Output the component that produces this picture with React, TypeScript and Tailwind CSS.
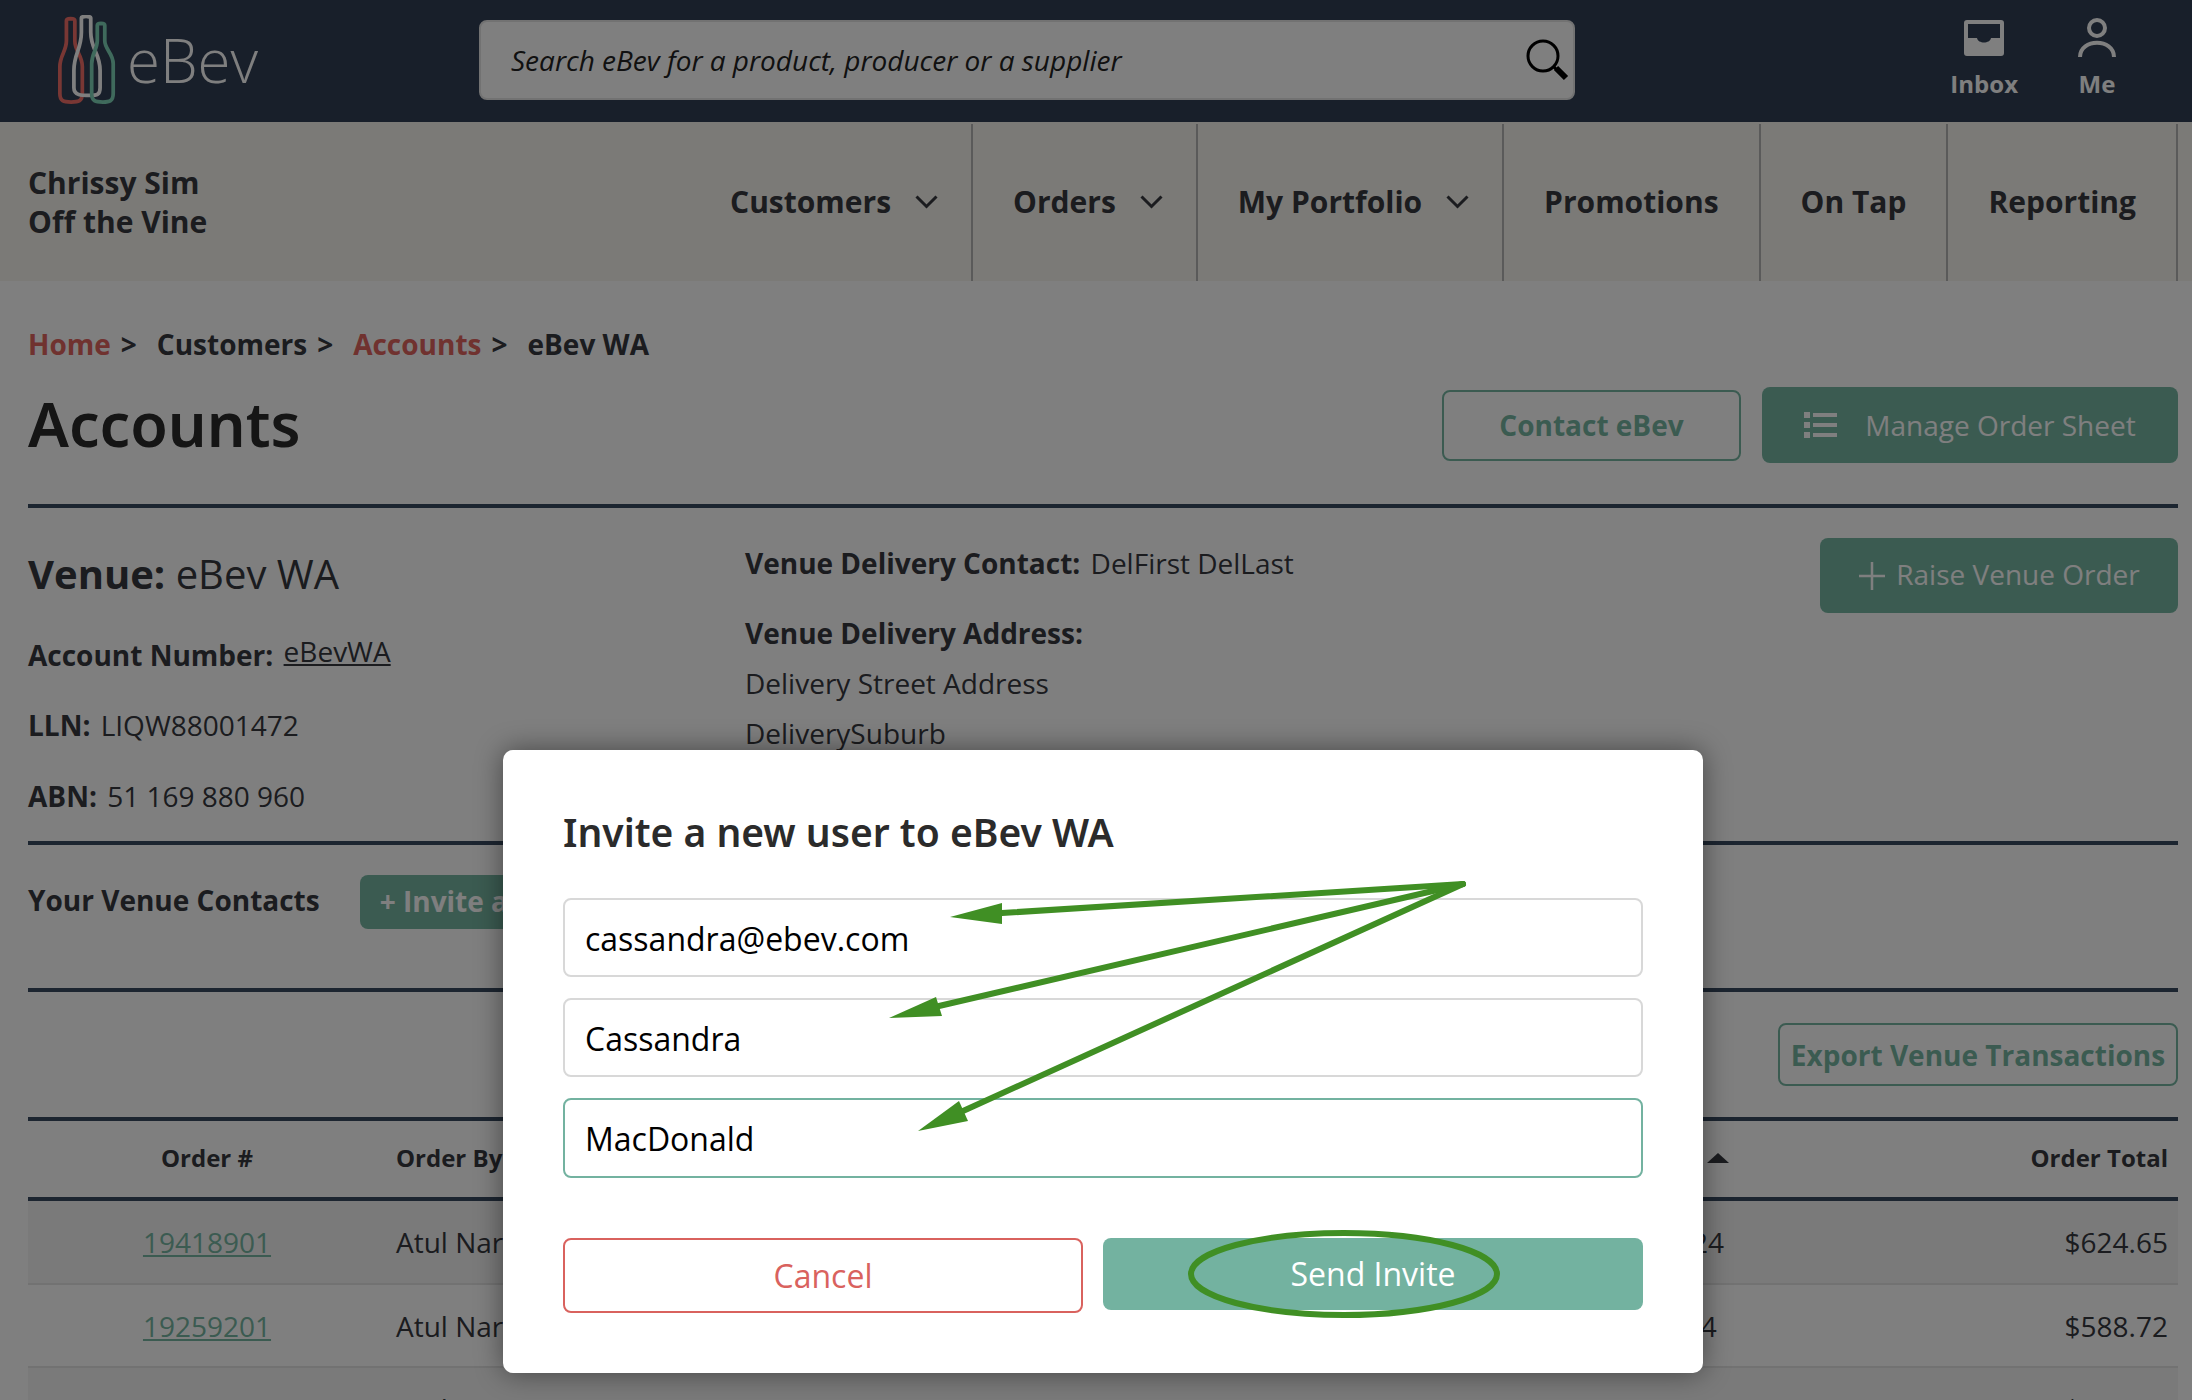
const navItems = [
  { label: "Customers", menu: true },
  { label: "Orders", menu: true },
  { label: "My Portfolio", menu: true },
  { label: "Promotions", menu: false },
  { label: "On Tap", menu: false },
  { label: "Reporting", menu: false },
];

const rows = [
  { id: "19418901", by: "Atul Narayan", date: "26 Feb 2024", total: "$624.65", shade: true },
  { id: "19259201", by: "Atul Narayan", date: "26 Jan 2024", total: "$588.72", shade: false },
  { id: "19103501", by: "Atul Narayan", date: "15 Dec 2023", total: "$512.30", shade: true },
];

function Logo() {
  return (
    <svg width="58" height="90" viewBox="0 0 62 94" fill="none" strokeWidth="4" preserveAspectRatio="none" className="shrink-0">
      <path
        d="M9 6 C9 3 18 3 18 6 L18 27 C18 38 26 42 26 54 L26 82 C26 90 22 91 14 91 C6 91 2 90 2 82 L2 54 C2 42 9 38 9 27 Z"
        stroke="#f36f68"
      />
      <path
        d="M25 3 C25 1 35 1 35 3 L35 18 C35 36 45 40 45 58 L45 76 C45 83 42 84 34 84 C25 84 17 84 17 76 L17 58 C17 40 25 36 25 18 Z"
        stroke="#ffffff"
      />
      <path
        d="M42 11 C42 8 50 8 50 11 L50 27 C50 36 59 40 59 51 L59 82 C59 90 55 91 48 91 C40 91 36 90 36 82 L36 51 C36 40 42 36 42 27 Z"
        stroke="#7fd4b8"
      />
    </svg>
  );
}

function SearchGlyph() {
  return (
    <svg width="44" height="42" viewBox="0 0 44 42" fill="none" stroke="#000000">
      <circle cx="17" cy="17" r="15" strokeWidth="3" />
      <path d="M28 28 L31 31" strokeWidth="3" />
      <path d="M30 29 L40 39" strokeWidth="6" />
    </svg>
  );
}

function InboxGlyph() {
  return (
    <svg width="40" height="36" viewBox="0 0 40 36">
      <path
        fillRule="evenodd"
        fill="#ffffff"
        d="M3 0 H37 A3 3 0 0 1 40 3 V33 A3 3 0 0 1 37 36 H3 A3 3 0 0 1 0 33 V3 A3 3 0 0 1 3 0 Z M4 4 V18 H13 C14 24 26 24 27 18 H36 V4 Z"
      />
    </svg>
  );
}

function MeGlyph() {
  return (
    <svg width="38" height="40" viewBox="0 0 38 40" fill="none" stroke="#ffffff" strokeWidth="4">
      <circle cx="19" cy="10" r="8" />
      <path d="M2 39 C2 20 36 20 36 39" />
    </svg>
  );
}

function ListGlyph() {
  return (
    <svg width="33" height="26" viewBox="0 0 33 26" fill="#ffffff">
      <rect x="0" y="0" width="6" height="6" />
      <rect x="9" y="1" width="24" height="4" />
      <rect x="0" y="10" width="6" height="6" />
      <rect x="9" y="11" width="24" height="4" />
      <rect x="0" y="20" width="6" height="6" />
      <rect x="9" y="21" width="24" height="4" />
    </svg>
  );
}

function NavChevron() {
  return (
    <svg width="23" height="14" viewBox="0 0 23 14" fill="none" stroke="#36383f" strokeWidth="3" className="ml-[24px]">
      <path d="M1.5 1.5 L11.5 11.5 L21.5 1.5" />
    </svg>
  );
}

function Annotations() {
  return (
    <svg className="pointer-events-none absolute inset-0" width="2192" height="1400" fill="none">
      <g stroke="#408f24" strokeWidth="6" strokeLinecap="round">
        <path d="M1463 884 L1002 913" />
        <path d="M1463 884 L939 1006" />
        <path d="M1463 884 L963 1111" />
      </g>
      <g fill="#408f24">
        <polygon points="950,917 1002,903 1002,924" />
        <polygon points="889,1018 936,997 942,1016" />
        <polygon points="918,1131 959,1101 968,1121" />
      </g>
      <ellipse cx="1344" cy="1274" rx="153" ry="41" stroke="#408f24" strokeWidth="6" />
    </svg>
  );
}

function InviteModal() {
  return (
    <div className="absolute left-[503px] top-[750px] h-[623px] w-[1200px] rounded-[10px] bg-white px-[60px] pt-[58px] shadow-[0_0_28px_rgba(0,0,0,0.45)]">
      <h2 className="font-['Noto_Sans'] text-[39px] font-semibold leading-[48px] text-[#2b2b2b]">
        Invite a new user to eBev WA
      </h2>
      <div className="mt-[42px] flex flex-col gap-[21px]">
        <input
          readOnly
          value="cassandra@ebev.com"
          className="h-[79px] w-full rounded-[8px] border-2 border-[#d8d8d8] px-[20px] pt-[1px] text-[32px] text-black outline-none"
        />
        <input
          readOnly
          value="Cassandra"
          className="h-[79px] w-full rounded-[8px] border-2 border-[#d8d8d8] px-[20px] pt-[1px] text-[32px] text-black outline-none"
        />
        <input
          readOnly
          value="MacDonald"
          className="h-[80px] w-full rounded-[8px] border-2 border-[#73b2a0] px-[20px] pt-[1px] text-[32px] text-black outline-none"
        />
      </div>
      <div className="mt-[60px] flex items-start gap-[20px]">
        <button className="h-[75px] w-[520px] rounded-[8px] border-2 border-[#d9625e] text-[32px] text-[#d9625e]">
          Cancel
        </button>
        <button className="h-[72px] w-[540px] rounded-[8px] bg-[#73b2a0] text-[32px] text-white">
          Send Invite
        </button>
      </div>
    </div>
  );
}

export default function App() {
  return (
    <div className="relative h-[1400px] w-[2192px] overflow-hidden bg-white font-['Open_Sans',sans-serif] text-[#36383f]">
      {/* Top bar */}
      <header className="flex h-[122px] items-center bg-[#303e54] pb-[3px]">
        <div className="flex w-[479px] items-center pl-[58px]">
          <Logo />
          <span className="ml-[11px] text-[60px] font-light leading-none text-white">eBev</span>
        </div>
        <div className="flex h-[80px] w-[1096px] items-center justify-between rounded-[8px] border-2 border-[#e4e4e4] bg-white pl-[30px] pr-[3px]">
          <span className="text-[28px] italic text-[#222222]">
            Search eBev for a product, producer or a supplier
          </span>
          <SearchGlyph />
        </div>
        <div className="mb-[9px] ml-auto flex pr-[76px] text-white">
          <div className="flex flex-col items-center">
            <div className="flex h-[58px] items-center">
              <InboxGlyph />
            </div>
            <span className="text-[24px] font-bold leading-[34px]">Inbox</span>
          </div>
          <div className="ml-[60px] flex flex-col items-center">
            <div className="flex h-[58px] items-center">
              <MeGlyph />
            </div>
            <span className="text-[24px] font-bold leading-[34px]">Me</span>
          </div>
        </div>
      </header>

      {/* Nav */}
      <nav className="flex h-[159px] items-stretch bg-[#f6f4ee] pl-[28px] pr-[14px] pt-[2px]">
        <div className="flex flex-col justify-center pb-[2px] text-[30px] font-bold leading-[39px]">
          <span>Chrissy Sim</span>
          <span>Off the Vine</span>
        </div>
        <div className="ml-auto flex">
          {navItems.map((item) => (
            <div
              key={item.label}
              className={`flex items-center border-r-2 border-[#b5b5b5] pb-[2px] pl-[40px] text-[30px] font-bold ${
                item.menu ? "pr-[33px]" : "pr-[40px]"
              }`}
            >
              {item.label}
              {item.menu && <NavChevron />}
            </div>
          ))}
        </div>
      </nav>

      <main className="pl-[28px] pr-[14px]">
        {/* Breadcrumb */}
        <div className="mt-[44px] flex h-[38px] items-center text-[28px] font-bold">
          <span className="text-[#e0645f]">Home</span>
          <span className="ml-[10px]">&gt;</span>
          <span className="ml-[20px]">Customers</span>
          <span className="ml-[10px]">&gt;</span>
          <span className="ml-[20px] text-[#e0645f]">Accounts</span>
          <span className="ml-[10px]">&gt;</span>
          <span className="ml-[20px]">eBev WA</span>
        </div>

        {/* Title row */}
        <div className="mt-[24px] flex h-[76px] items-center">
          <h1 className="-translate-y-[2px] font-['Noto_Sans'] text-[61px] font-semibold leading-none text-[#2a2a2a]">
            Accounts
          </h1>
          <button className="ml-auto h-[71px] w-[299px] rounded-[8px] border-2 border-[#77b7a3] text-[28px] font-bold text-[#77b7a3]">
            Contact eBev
          </button>
          <button className="ml-[21px] flex h-[76px] w-[416px] items-center justify-center gap-[28px] rounded-[8px] bg-[#77b7a3] text-[28px] text-white">
            <ListGlyph />
            Manage Order Sheet
          </button>
        </div>
        <div className="mt-[41px] h-[4px] bg-[#384a60]" />

        {/* Venue */}
        <div className="flex h-[333px]">
          <div className="w-[717px] shrink-0 text-[28px] leading-[38px]">
            <p className="mt-[38px] text-[40px] leading-[56px]">
              <b className="font-bold">Venue:</b> eBev WA
            </p>
            <p className="mt-[34px]">
              <b className="mr-[3px] font-bold">Account Number:</b>{" "}
              <span className="inline-block -translate-y-[4px] underline">eBevWA</span>
            </p>
            <p className="mt-[32px]">
              <b className="mr-[3px] font-bold">LLN:</b> LIQW88001472
            </p>
            <p className="mt-[33px]">
              <b className="mr-[3px] font-bold">ABN:</b> 51 169 880 960
            </p>
          </div>
          <div className="text-[28px] leading-[38px]">
            <p className="mt-[36px]">
              <b className="mr-[3px] font-bold">Venue Delivery Contact:</b> DelFirst DelLast
            </p>
            <p className="mt-[32px] font-bold">Venue Delivery Address:</p>
            <p className="mt-[12px]">Delivery Street Address</p>
            <p className="mt-[12px]">DeliverySuburb</p>
          </div>
          <button className="ml-auto mt-[30px] flex h-[75px] w-[358px] items-center justify-center gap-[12px] rounded-[8px] bg-[#77b7a3] pb-[3px] text-[28px] text-white">
            <svg width="26" height="36" viewBox="0 0 26 36" stroke="#ffffff" strokeWidth="2.5" className="translate-x-[1px] translate-y-[2px]">
              <path d="M13 4 V32 M0 18 H26" />
            </svg>
            Raise Venue Order
          </button>
        </div>
        <div className="h-[4px] bg-[#384a60]" />

        {/* Contacts */}
        <div className="mt-[30px] flex h-[54px] items-center">
          <span className="-translate-y-[2px] text-[28px] font-bold">Your Venue Contacts</span>
          <button className="ml-[40px] flex h-[54px] items-center rounded-[8px] bg-[#77b7a3] px-[20px] pb-[2px] text-[28px] font-bold text-white">
            + Invite a new user
          </button>
        </div>
        <div className="mt-[59px] h-[4px] bg-[#384a60]" />

        {/* Export */}
        <div className="mt-[31px] flex justify-end">
          <button className="h-[63px] w-[400px] rounded-[8px] border-2 border-[#77b7a3] text-[28px] font-bold text-[#77b7a3]">
            Export Venue Transactions
          </button>
        </div>

        {/* Table */}
        <div className="mt-[31px] flex h-[84px] items-center border-y-4 border-[#384a60] pb-[2px] text-[24px] font-bold">
          <div className="w-[358px] text-center">Order #</div>
          <div className="w-[1150px] pl-[10px]">Order By</div>
          <svg width="22" height="10" viewBox="0 0 22 10" fill="#36383f" className="ml-[171px]">
            <path d="M11 0 L22 10 H0 Z" />
          </svg>
          <div className="ml-auto pr-[10px]">Order Total</div>
        </div>
        {rows.map((row) => (
          <div
            key={row.id}
            className={`flex h-[83.5px] items-start border-b-2 border-[#e4e4e4] pt-[20px] text-[28px] ${
              row.shade ? "bg-[#f4f4f4]" : "bg-white"
            }`}
          >
            <div className="w-[358px] text-center text-[#77b7a3] underline">{row.id}</div>
            <div className="w-[1180px] pl-[10px]">{row.by}</div>
            <div>{row.date}</div>
            <div className="ml-auto pr-[10px]">{row.total}</div>
          </div>
        ))}
      </main>

      {/* Backdrop and dialog */}
      <div className="absolute inset-0 bg-black/50" />
      <InviteModal />
      <Annotations />
    </div>
  );
}
